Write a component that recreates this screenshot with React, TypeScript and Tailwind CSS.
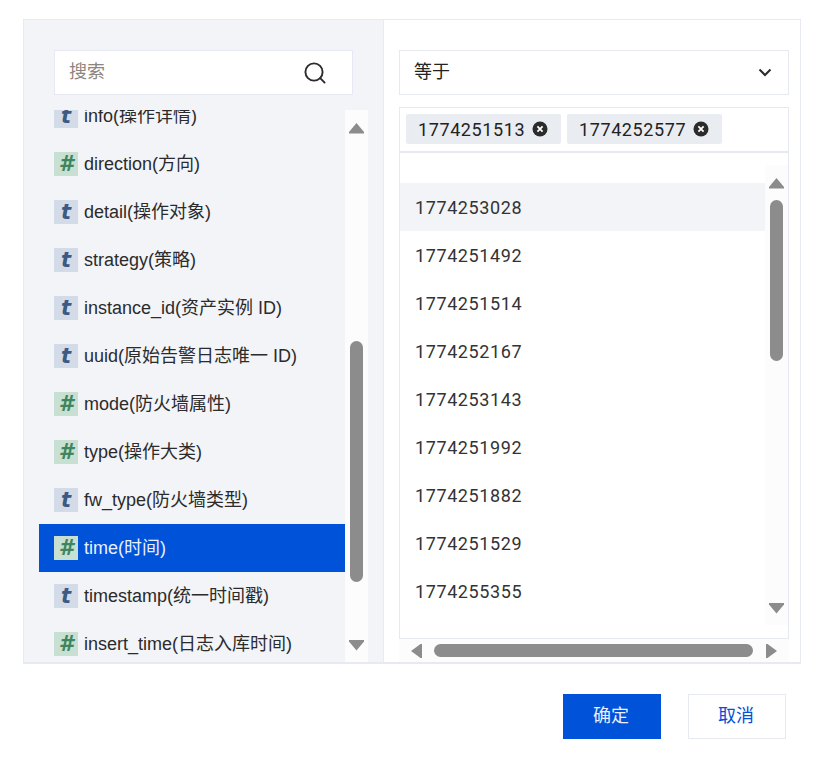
const SANS = "font-['Liberation_Sans','Noto_Sans_CJK_SC',sans-serif]";

const fields: [string, string][] = [
  ["t", "info(操作详情)"],
  ["#", "direction(方向)"],
  ["t", "detail(操作对象)"],
  ["t", "strategy(策略)"],
  ["t", "instance_id(资产实例 ID)"],
  ["t", "uuid(原始告警日志唯一 ID)"],
  ["#", "mode(防火墙属性)"],
  ["#", "type(操作大类)"],
  ["t", "fw_type(防火墙类型)"],
  ["#", "time(时间)"],
  ["t", "timestamp(统一时间戳)"],
  ["#", "insert_time(日志入库时间)"],
];

const values = [
  "1774253028",
  "1774251492",
  "1774251514",
  "1774252167",
  "1774253143",
  "1774251992",
  "1774251882",
  "1774251529",
  "1774255355",
];

function Arrow({ dir, className }: { dir: "up" | "down" | "left" | "right"; className?: string }) {
  const pts = {
    up: "7.5,1 15,10 15,11.5 0,11.5 0,10",
    down: "0,0 15,0 15,1.5 7.5,10.5 0,1.5",
    left: "11,0 11,14 9.5,14 0,7 9.5,0",
    right: "0,0 1.5,0 11,7 1.5,14 0,14",
  }[dir];
  const horizontal = dir === "left" || dir === "right";
  return (
    <svg width={horizontal ? 11 : 15} height={horizontal ? 14 : 12} viewBox={horizontal ? "0 0 11 14" : "0 0 15 12"} className={className}>
      <polygon points={pts} fill="#8c8c8c" />
    </svg>
  );
}

function TypeBadge({ kind }: { kind: string }) {
  return kind === "t" ? (
    <span className="flex h-6 w-6 shrink-0 items-center justify-center bg-[#d2dbe7] font-['DejaVu_Sans',sans-serif] text-[21px] leading-none font-bold text-[#3b5a84] italic">
      t
    </span>
  ) : (
    <span className="flex h-6 w-6 shrink-0 items-center justify-center bg-[#c7e0d2] font-['DejaVu_Sans',sans-serif] text-[21px] leading-none font-bold text-[#3f8560] italic">
      #
    </span>
  );
}

function Chip({ text }: { text: string }) {
  return (
    <div className="flex h-[30px] w-[155px] items-center rounded-[2px] bg-[#e9ecf1] pl-3 font-['Roboto',sans-serif] text-[18px] tracking-[0.6px] text-[#222]">
      <span>{text}</span>
      <svg width="16" height="16" viewBox="0 0 16 16" className="ml-[7px]">
        <circle cx="8" cy="8" r="7.5" fill="#2b2b2b" />
        <path d="M5.4 5.4l5.2 5.2M10.6 5.4l-5.2 5.2" stroke="#fff" strokeWidth="1.8" />
      </svg>
    </div>
  );
}

export default function App() {
  return (
    <div className={`h-[759px] w-[822px] bg-white ${SANS}`}>
      <div className="ml-[23px] pt-[19px]">
        <div className="flex h-[645px] w-[778px] border border-b-2 border-[#e8eaf1]">
          {/* Left panel */}
          <div className="flex w-[359px] flex-col bg-[#f2f4f8]">
            <div className="mt-[30px] ml-[30px] flex h-[45px] w-[299px] items-center border border-[#e6e9f2] bg-white pr-[26px] pl-[14px]">
              <span className="flex-1 text-[18px] text-[#8c8580]">搜索</span>
              <svg width="22" height="22" viewBox="0 0 22 22" fill="none" stroke="#2b2b2b" strokeWidth="1.9">
                <circle cx="10" cy="10" r="8.6" />
                <path d="M16.2 16.2l4.4 4.4" strokeLinecap="round" />
              </svg>
            </div>
            <div className="mt-[15px] flex min-h-0 flex-1 pl-[15px]">
              <div className="min-h-0 w-[306px] overflow-hidden">
                <div className="-mt-[18px]">
                  {fields.map(([kind, label]) => {
                    const active = label === "time(时间)";
                    return (
                      <div
                        key={label}
                        className={`flex h-12 items-center gap-[6px] pl-[15px] text-[18px] whitespace-nowrap ${
                          active ? "bg-[#0052d9] text-[#e8f0ff]" : "text-[#2b2b2b]"
                        }`}
                      >
                        <TypeBadge kind={kind} />
                        <span>{label}</span>
                      </div>
                    );
                  })}
                </div>
              </div>
              <div className="flex w-[23px] flex-col items-center bg-[#fcfcfc]">
                <Arrow dir="up" className="mt-[12px]" />
                <div className="mt-[207px] h-[241px] w-[13px] rounded-[6.5px] bg-[#8c8c8c]" />
                <Arrow dir="down" className="mt-[58px]" />
              </div>
            </div>
          </div>

          {/* Right panel */}
          <div className="flex flex-1 flex-col border-l border-[#e8eaf1] pt-[30px] pl-[15px]">
            <div className="flex h-[45px] w-[390px] items-center justify-between border border-[#e6e9f2] pr-[16px] pl-[14px] text-[18px] text-[#222]">
              <span>等于</span>
              <svg width="14" height="9" viewBox="0 0 14 9" fill="none" stroke="#2b2b2b" strokeWidth="2">
                <path d="M1.5 1.5L7 7l5.5-5.5" />
              </svg>
            </div>
            <div className="mt-3 flex h-[46px] w-[390px] gap-[6px] border border-b-2 border-[#e6e9f2] pt-[6px] pl-[6px]">
              <Chip text="1774251513" />
              <Chip text="1774252577" />
            </div>
            <div className="flex h-[486px] w-[390px] border border-t-0 border-[#e6e9f2]">
              <div className="w-[365px] pt-[30px] font-['Roboto',sans-serif] text-[18px] tracking-[0.6px] text-[#333]">
                {values.map((v, i) => (
                  <div key={v} className={`flex h-12 items-center pl-[15px] ${i === 0 ? "bg-[#f2f4f8]" : ""}`}>
                    {v}
                  </div>
                ))}
              </div>
              <div className="mt-[12px] flex h-[460px] w-[23px] flex-col items-center bg-[#fcfcfc]">
                <Arrow dir="up" className="mt-[12px]" />
                <div className="mt-[11px] h-[161px] w-[13px] rounded-[6.5px] bg-[#8c8c8c]" />
                <Arrow dir="down" className="mt-[242px]" />
              </div>
            </div>
            <div className="flex h-[23px] w-[390px] items-center bg-[#fcfcfc]">
              <Arrow dir="left" className="ml-[12px]" />
              <div className="ml-[12px] h-[13px] w-[319px] rounded-[6.5px] bg-[#8c8c8c]" />
              <Arrow dir="right" className="ml-[13px]" />
            </div>
          </div>
        </div>

        <div className="mt-[30px] flex w-[763px] justify-end gap-[27px] text-[18px]">
          <button className="h-[45px] w-[98px] bg-[#0052d9] pr-[2px] text-[#e8f0ff]">确定</button>
          <button className="h-[45px] w-[98px] border border-[#e6e9f2] bg-white pr-[2px] text-[#0052d9]">取消</button>
        </div>
      </div>
    </div>
  );
}
